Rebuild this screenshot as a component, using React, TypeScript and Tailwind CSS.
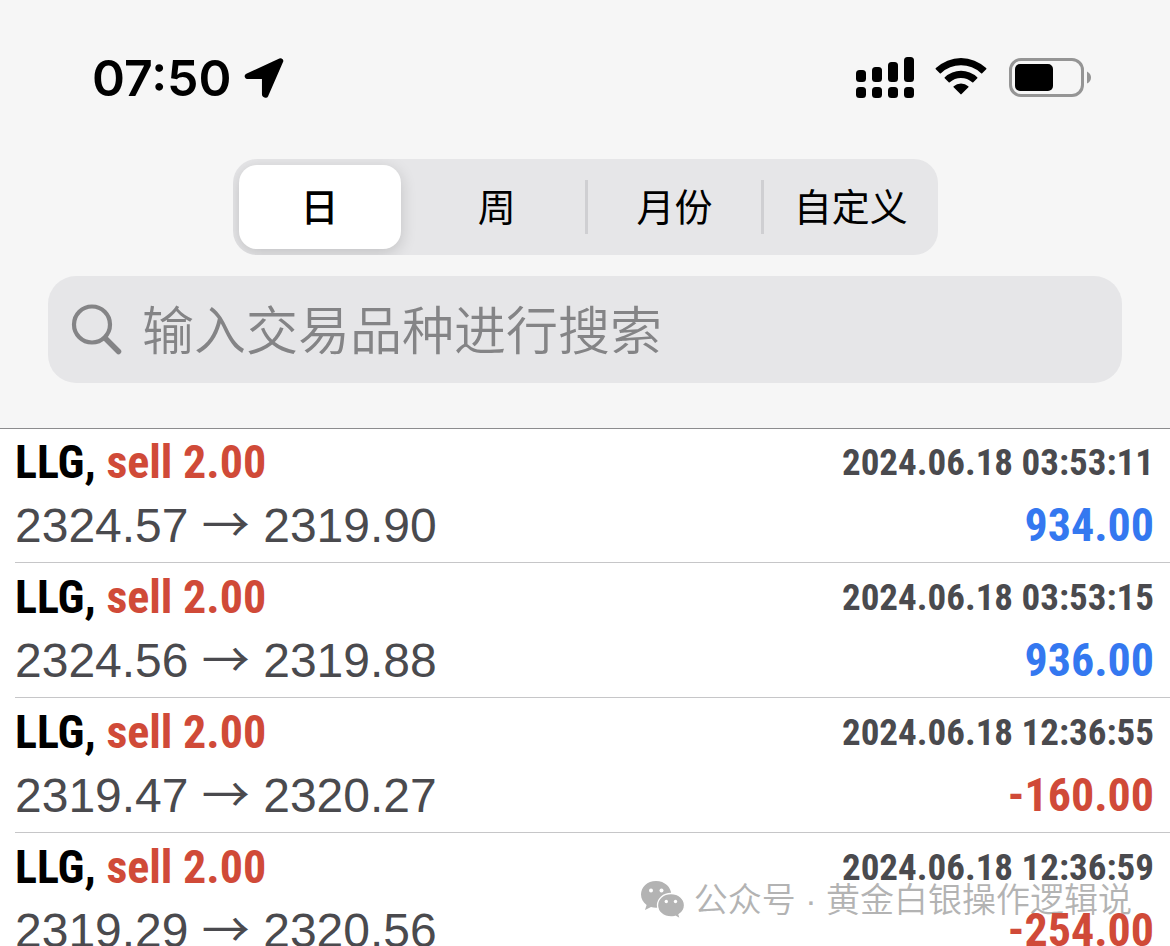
import React from "react";

type Deal = {
  symbol: string;
  side: string;
  open: string;
  close: string;
  time: string;
  profit: string;
};

const deals: Deal[] = [
  { symbol: "LLG,", side: "sell 2.00", open: "2324.57", close: "2319.90", time: "2024.06.18 03:53:11", profit: "934.00" },
  { symbol: "LLG,", side: "sell 2.00", open: "2324.56", close: "2319.88", time: "2024.06.18 03:53:15", profit: "936.00" },
  { symbol: "LLG,", side: "sell 2.00", open: "2319.47", close: "2320.27", time: "2024.06.18 12:36:55", profit: "-160.00" },
  { symbol: "LLG,", side: "sell 2.00", open: "2319.29", close: "2320.56", time: "2024.06.18 12:36:59", profit: "-254.00" },
];

const periods = ["日", "周", "月份", "自定义"];

function LocationIcon() {
  return (
    <svg width="40" height="42" viewBox="0 0 40 42" aria-hidden="true">
      <path
        d="M36.5 4 3.5 19.3H20.7V37.500L21.700 38Z"
        fill="#000"
        stroke="#000"
        strokeWidth="5.5"
        strokeLinejoin="round"
      />
    </svg>
  );
}

function SignalIcon() {
  return (
    <svg width="58" height="42" viewBox="0 0 58 42" aria-hidden="true">
      <rect x="0" y="14" width="10" height="12" rx="3.5" />
      <rect x="16" y="11" width="10" height="15" rx="3.5" />
      <rect x="32" y="6" width="10" height="20" rx="3.5" />
      <rect x="48" y="1" width="10" height="25" rx="3.5" />
      <rect x="0" y="31" width="10" height="11" rx="3.5" />
      <rect x="16" y="31" width="10" height="11" rx="3.5" />
      <rect x="32" y="31" width="10" height="11" rx="3.5" />
      <rect x="48" y="31" width="10" height="11" rx="3.5" />
    </svg>
  );
}

function WifiIcon() {
  return (
    <svg width="53" height="40" viewBox="0 0 53 40" aria-hidden="true">
      <path d="M.8 12.2Q.3 11.7.9 11.1A36.5 36.5 0 0 1 51.1 11.1Q51.7 11.7 51.2 12.2L47.2 16.2Q46.7 16.7 46.1 16.2A29.3 29.3 0 0 0 5.9 16.2Q5.3 16.7 4.8 16.2Z" />
      <path d="M9.7 21.3Q9.2 20.8 9.8 20.2A23.8 23.8 0 0 1 42.2 20.2Q42.8 20.8 42.3 21.3L38.3 25.3Q37.8 25.8 37.2 25.3A16.8 16.8 0 0 0 14.8 25.3Q14.2 25.8 13.7 25.3Z" />
      <path d="M18.6 30.3Q18.1 29.8 18.7 29.2A11 11 0 0 1 33.3 29.2Q33.9 29.8 33.4 30.3L26.6 37.1Q26 37.7 25.4 37.1Z" />
    </svg>
  );
}

function BatteryIcon() {
  return (
    <svg width="82" height="40" viewBox="0 0 82 40" aria-hidden="true">
      <rect x="1.5" y="2.5" width="72" height="36" rx="10.5" fill="none" stroke="#959595" strokeWidth="3" />
      <rect x="6" y="7" width="38" height="27" rx="5" />
      <path d="M78 14.5Q82 16.5 82 20.5T78 26.5Z" fill="#959595" />
    </svg>
  );
}

function SearchIcon() {
  return (
    <svg width="52" height="52" viewBox="0 0 52 52" fill="none" stroke="#848486" aria-hidden="true">
      <circle cx="21" cy="20.5" r="18" strokeWidth="4.2" />
      <path d="M34.5 34.5 47.5 47.5" strokeWidth="5.5" strokeLinecap="round" />
    </svg>
  );
}

function WechatIcon() {
  return (
    <svg width="46" height="40" viewBox="0 0 46 40" aria-hidden="true">
      <path
        d="M16 1C7.2 1 1 7.2 1 14.6c0 4.3 2 7.8 5.6 10.4L5 30l6-3c1.6.5 3.3.8 5 .8 8.8 0 15.3-5.9 15.3-13.2S24.8 1 16 1Z"
        fill="#b3b3b3"
      />
      <path
        d="M31 13.5c-7.7 0-13.5 5.2-13.5 11.7S23.3 37 31 37c1.5 0 3-.2 4.4-.7l5 2.7-1.4-4.4c3.5-2.3 5.5-5.5 5.5-9.4 0-6.5-5.8-11.7-13.5-11.7Z"
        fill="#b3b3b3"
        stroke="#fff"
        strokeWidth="1.3"
      />
      <g fill="#fff">
        <circle cx="11" cy="10.5" r="2" />
        <circle cx="21.5" cy="10.5" r="2" />
        <circle cx="26.3" cy="21.5" r="1.7" />
        <circle cx="35.5" cy="21.5" r="1.7" />
      </g>
    </svg>
  );
}

function DealRow({ deal }: { deal: Deal }) {
  const loss = deal.profit.startsWith("-");
  return (
    <li className="ml-[15px] border-b border-[#c6c6c8] pt-[3px] pr-4 pb-[5px] leading-[63px]">
      <div className="flex h-[63px] justify-between font-['Roboto_Condensed','Liberation_Sans_Narrow',sans-serif] font-bold whitespace-nowrap">
        <p className="text-[46px]">
          {deal.symbol} <span className="text-[#d04a38]">{deal.side}</span>
        </p>
        <time className="text-[37px] text-[#4a4a4e]">{deal.time}</time>
      </div>
      <div className="flex h-[63px] justify-between text-[48px] whitespace-nowrap">
        <p className="text-[#4a4a4e]">
          {deal.open}{" "}
          <span className="font-['Noto_Sans_CJK_SC',sans-serif] leading-none">→</span>{" "}
          {deal.close}
        </p>
        <p
          className={`font-['Roboto_Condensed','Liberation_Sans_Narrow',sans-serif] text-[46px] font-bold ${
            loss ? "text-[#d04a38]" : "text-[#3478f0]"
          }`}
        >
          {deal.profit}
        </p>
      </div>
    </li>
  );
}

export default function App() {
  const [period, setPeriod] = React.useState("日");
  return (
    <div className="relative isolate h-screen overflow-hidden bg-white font-['Liberation_Sans','Noto_Sans_CJK_SC',sans-serif] text-black">
      <header className="border-b border-[#8c8c8e] bg-[#f6f6f6] px-12 pb-[45px]">
        <div className="flex h-[159px] items-start justify-between pt-12 pr-[31px] pl-11">
          <div className="flex h-[60px] items-center gap-3">
            <time className="font-['Inter',sans-serif] text-[50px] leading-[60px] font-semibold">07:50</time>
            <LocationIcon />
          </div>
          <div className="flex h-[58px] items-center gap-[21px]">
            <SignalIcon />
            <WifiIcon />
            <BatteryIcon />
          </div>
        </div>

        <div
          role="group"
          aria-label="时间范围"
          className="mx-auto grid h-24 w-full max-w-[705px] grid-cols-4 items-center overflow-hidden rounded-[24px] bg-[#e6e6e8]"
        >
          {periods.map((p, i) => (
            <div key={p} className={i > 1 ? "h-[54px] border-l-3 border-[#cfcfd2]" : "h-[84px]"}>
              <div className={p === period ? "h-full pr-2 pl-1.5" : "h-full"}>
                <button
                  type="button"
                  aria-pressed={p === period}
                  onClick={() => setPeriod(p)}
                  className={`h-full w-full pt-0.5 text-[38px] leading-[50px] whitespace-nowrap ${
                    p === period
                      ? "rounded-[18px] bg-white font-medium shadow-[0_4px_16px_rgba(0,0,0,0.16)]"
                      : "font-normal"
                  }`}
                >
                  {p}
                </button>
              </div>
            </div>
          ))}
        </div>

        <div className="mt-[21px] flex h-[107px] items-center gap-[19px] rounded-[28px] bg-[#e6e6e8] px-[23px]">
          <label htmlFor="search" aria-label="搜索">
            <SearchIcon />
          </label>
          <input
            id="search"
            type="text"
            placeholder="输入交易品种进行搜索"
            className="h-full min-w-0 flex-1 bg-transparent pt-1 text-[52px] font-[350] outline-none placeholder:text-[#848486]"
          />
        </div>
      </header>

      <main>
        <ul className="-mt-px">
          {deals.map((deal) => (
            <DealRow key={deal.time} deal={deal} />
          ))}
        </ul>
      </main>

      <div className="absolute right-[38px] bottom-6 -z-10 flex items-center gap-2 text-[34px] leading-[44px] font-[350] whitespace-nowrap text-[#b3b3b3]">
        <WechatIcon />
        <span>公众号 · 黄金白银操作逻辑说</span>
      </div>
    </div>
  );
}
